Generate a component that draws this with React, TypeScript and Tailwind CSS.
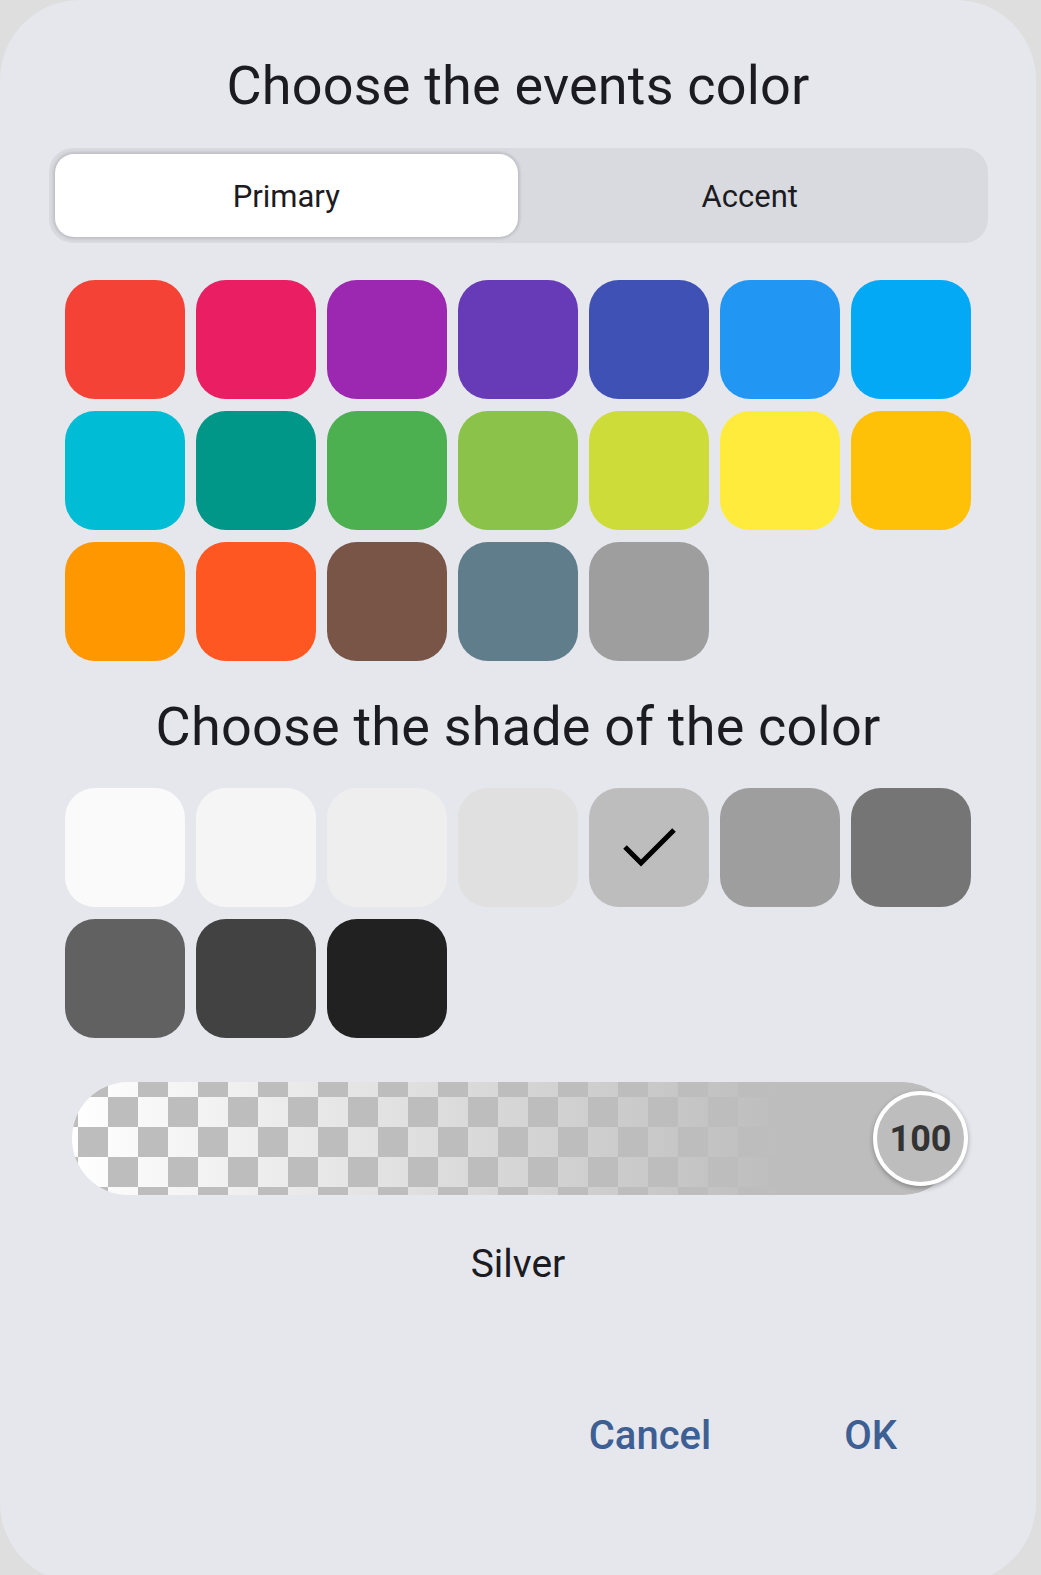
import React from "react";

const primaryColors = [
  "#f44336", "#e91e63", "#9c27b0", "#673ab7", "#3f51b5", "#2196f3", "#03a9f4",
  "#00bcd4", "#009688", "#4caf50", "#8bc34a", "#cddc39", "#ffeb3b", "#ffc107",
  "#ff9800", "#ff5722", "#795548", "#607d8b", "#9e9e9e",
];

const shades = [
  "#fafafa", "#f5f5f5", "#eeeeee", "#e0e0e0", "#bdbdbd",
  "#9e9e9e", "#757575", "#616161", "#424242", "#212121",
];

const SELECTED_SHADE = 4;

const Swatch = ({ color, selected }: { color: string; selected?: boolean }) => (
  <div
    className="w-[120px] h-[119px] rounded-[30px] flex items-center justify-center"
    style={{ backgroundColor: color }}
  >
    {selected && (
      <svg width="54" height="42" viewBox="0 0 54 42" fill="none" className="-mt-[2px]">
        <polyline points="3,21 19,37 52,4" stroke="#000" strokeWidth="5" strokeLinejoin="miter" />
      </svg>
    )}
  </div>
);

const OpacitySlider = () => (
  <div className="relative self-start ml-[72px] mt-[44px] w-[886px] h-[113px]">
    <div className="w-full h-full rounded-full overflow-hidden bg-[repeating-conic-gradient(#bdbdbd_0_25%,#ffffff_0_50%)] bg-[length:60px_60px] bg-[position:6px_15px]">
      <div className="w-full h-full bg-linear-to-r from-[#bdbdbd00] to-[#bdbdbd] to-80%" />
    </div>
    {/* thumb */}
    <div className="absolute left-[801px] top-[9px] w-[95px] h-[95px] rounded-full border-[4px] border-white bg-[#bdbdbd] shadow-[0_2px_5px_rgba(0,0,0,0.3)] flex items-center justify-center">
      <span className="text-[36px] font-bold text-[#333333] leading-none">100</span>
    </div>
  </div>
);

export default function App() {
  return (
    <div className="w-[1041px] h-[1575px] overflow-hidden bg-[#dedede] font-['Roboto',sans-serif]">
      <div className="w-[1036px] h-[1583px] rounded-[80px] bg-[#e6e7ed] flex flex-col items-center text-[#1b1b21]">
        {/* Title */}
        <h2 className="pt-[54px] text-[54px] leading-[64px] font-normal tracking-[0.2px]">Choose the events color</h2>

        {/* Segmented tabs */}
        <div className="mt-[30px] w-[939px] h-[95px] rounded-[24px] bg-[#d9dae0] p-[6px] flex">
          <button className="flex-1 rounded-[19px] bg-white shadow-[0_0_3px_2px_rgba(0,0,0,0.12)] flex items-center justify-center pt-[3px] text-[31px] text-[#1b1b21]">
            Primary
          </button>
          <button className="flex-1 flex items-center justify-center pt-[3px] text-[31px] text-[#1b1b21]">
            Accent
          </button>
        </div>

        {/* Primary colours */}
        <div className="mt-[37px] grid grid-cols-[repeat(7,120px)] gap-x-[11px] gap-y-[12px]">
          {primaryColors.map((c) => (
            <Swatch key={c + "p"} color={c} />
          ))}
        </div>

        <h2 className="mt-[34px] text-[54px] leading-[64px] font-normal tracking-[0.2px]">Choose the shade of the color</h2>

        {/* Shades */}
        <div className="mt-[29px] grid grid-cols-[repeat(7,120px)] gap-x-[11px] gap-y-[12px]">
          {shades.map((c, i) => (
            <Swatch key={c} color={c} selected={i === SELECTED_SHADE} />
          ))}
        </div>

        <OpacitySlider />

        <div className="mt-[46px] text-[39px] leading-[46px]">Silver</div>

        {/* Actions */}
        <div className="mt-[125px] w-full flex justify-end gap-[133px] pr-[139px]">
          <button className="text-[40px] leading-[48px] font-medium text-[#3d5f94]">Cancel</button>
          <button className="text-[40px] leading-[48px] font-medium text-[#3d5f94]">OK</button>
        </div>
      </div>
    </div>
  );
}
